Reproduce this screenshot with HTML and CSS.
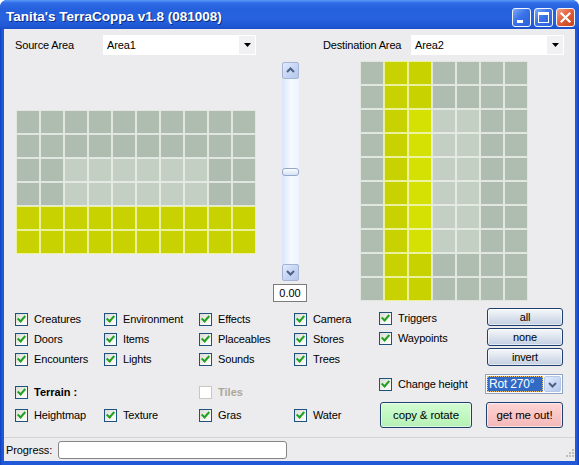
FILE: index.html
```html
<!DOCTYPE html>
<html>
<head>
<meta charset="utf-8">
<title>Tanita's TerraCoppa</title>
<link rel="stylesheet" href="styles.css">
</head>
<body>
<div class="window">
  <div class="titlebar">
    <span class="title">Tanita's TerraCoppa v1.8 (081008)</span>
    <div class="tbtns">
      <span class="tb"><svg width="17" height="17" viewBox="0 0 17 17"><rect x="4" y="11" width="6" height="3" fill="#fff"/></svg></span>
      <span class="tb"><svg width="17" height="17" viewBox="0 0 17 17"><rect x="3.5" y="3.5" width="10" height="10" fill="none" stroke="#fff" stroke-width="1"/><rect x="3" y="3" width="11" height="3" fill="#fff"/></svg></span>
      <span class="tb close"><svg width="17" height="17" viewBox="0 0 17 17"><path d="M4.5 4.5 L12.5 12.5 M12.5 4.5 L4.5 12.5" stroke="#fff" stroke-width="2.2" stroke-linecap="square"/></svg></span>
    </div>
  </div>
  <div class="client">
    <div class="main">
      <div class="top">
        <div class="field src">
          <span class="flabel">Source Area</span>
          <div class="combo"><span class="ctext">Area1</span><span class="dd"><svg width="7" height="4" viewBox="0 0 7 4"><path d="M0 0 H7 L3.5 4 Z" fill="#000"/></svg></span></div>
        </div>
        <div class="field dst">
          <span class="flabel">Destination Area</span>
          <div class="combo"><span class="ctext">Area2</span><span class="dd"><svg width="7" height="4" viewBox="0 0 7 4"><path d="M0 0 H7 L3.5 4 Z" fill="#000"/></svg></span></div>
        </div>
        <div class="cells lgrid">
          <i class="g"></i><i class="g"></i><i class="g"></i><i class="g"></i><i class="g"></i><i class="g"></i><i class="g"></i><i class="g"></i><i class="g"></i><i class="g"></i>
          <i class="g"></i><i class="g"></i><i class="g"></i><i class="g"></i><i class="g"></i><i class="g"></i><i class="g"></i><i class="g"></i><i class="g"></i><i class="g"></i>
          <i class="g"></i><i class="g"></i><i class="l"></i><i class="l"></i><i class="l"></i><i class="l"></i><i class="l"></i><i class="l"></i><i class="g"></i><i class="g"></i>
          <i class="g"></i><i class="g"></i><i class="l"></i><i class="l"></i><i class="l"></i><i class="l"></i><i class="l"></i><i class="l"></i><i class="g"></i><i class="g"></i>
          <i class="y"></i><i class="y"></i><i class="y"></i><i class="y"></i><i class="y"></i><i class="y"></i><i class="y"></i><i class="y"></i><i class="y"></i><i class="y"></i>
          <i class="y"></i><i class="y"></i><i class="y"></i><i class="y"></i><i class="y"></i><i class="y"></i><i class="y"></i><i class="y"></i><i class="y"></i><i class="y"></i>
        </div>
        <div class="slider">
          <div class="sbar">
            <span class="sbtn"><svg width="15" height="15" viewBox="0 0 15 15"><path d="M4 9 L7.5 5.5 L11 9" fill="none" stroke="#4d6185" stroke-width="2"/></svg></span>
            <div class="track"><span class="thumb"></span></div>
            <span class="sbtn"><svg width="15" height="15" viewBox="0 0 15 15"><path d="M4 6 L7.5 9.5 L11 6" fill="none" stroke="#4d6185" stroke-width="2"/></svg></span>
          </div>
          <div class="val">0.00</div>
        </div>
        <div class="cells rgrid">
          <i class="g"></i><i class="y"></i><i class="y"></i><i class="g"></i><i class="g"></i><i class="g"></i><i class="g"></i>
          <i class="g"></i><i class="y"></i><i class="y"></i><i class="g"></i><i class="g"></i><i class="g"></i><i class="g"></i>
          <i class="g"></i><i class="y"></i><i class="b"></i><i class="l"></i><i class="l"></i><i class="g"></i><i class="g"></i>
          <i class="g"></i><i class="y"></i><i class="b"></i><i class="l"></i><i class="l"></i><i class="g"></i><i class="g"></i>
          <i class="g"></i><i class="y"></i><i class="b"></i><i class="l"></i><i class="l"></i><i class="g"></i><i class="g"></i>
          <i class="g"></i><i class="y"></i><i class="b"></i><i class="l"></i><i class="l"></i><i class="g"></i><i class="g"></i>
          <i class="g"></i><i class="y"></i><i class="b"></i><i class="l"></i><i class="l"></i><i class="g"></i><i class="g"></i>
          <i class="g"></i><i class="y"></i><i class="b"></i><i class="l"></i><i class="l"></i><i class="g"></i><i class="g"></i>
          <i class="g"></i><i class="y"></i><i class="y"></i><i class="g"></i><i class="g"></i><i class="g"></i><i class="g"></i>
          <i class="g"></i><i class="y"></i><i class="y"></i><i class="g"></i><i class="g"></i><i class="g"></i><i class="g"></i>
        </div>
      </div>
      <div class="bottom">
        <div class="lblock">
          <div class="opts">
            <label class="chk"><span class="cb on"></span>Creatures</label>
            <label class="chk"><span class="cb on"></span>Environment</label>
            <label class="chk"><span class="cb on"></span>Effects</label>
            <label class="chk"><span class="cb on"></span>Camera</label>
            <label class="chk"><span class="cb on"></span>Doors</label>
            <label class="chk"><span class="cb on"></span>Items</label>
            <label class="chk"><span class="cb on"></span>Placeables</label>
            <label class="chk"><span class="cb on"></span>Stores</label>
            <label class="chk"><span class="cb on"></span>Encounters</label>
            <label class="chk"><span class="cb on"></span>Lights</label>
            <label class="chk"><span class="cb on"></span>Sounds</label>
            <label class="chk"><span class="cb on"></span>Trees</label>
          </div>
          <div class="opts terr">
            <label class="chk bold"><span class="cb on"></span>Terrain :</label>
            <span></span>
            <label class="chk bold dis"><span class="cb off"></span>Tiles</label>
            <span></span>
            <label class="chk"><span class="cb on"></span>Heightmap</label>
            <label class="chk"><span class="cb on"></span>Texture</label>
            <label class="chk"><span class="cb on"></span>Gras</label>
            <label class="chk"><span class="cb on"></span>Water</label>
          </div>
        </div>
        <div class="rblock">
          <label class="chk"><span class="cb on"></span>Triggers</label>
          <span class="btn small">all</span>
          <label class="chk"><span class="cb on"></span>Waypoints</label>
          <span class="btn small">none</span>
          <span></span>
          <span class="btn small">invert</span>
          <label class="chk low"><span class="cb on"></span>Change height</label>
          <div class="rcombo"><span class="sel">Rot 270°</span><span class="rdd"><svg width="15" height="15" viewBox="0 0 15 15"><path d="M4 6 L7.5 9.5 L11 6" fill="none" stroke="#4d6185" stroke-width="2"/></svg></span></div>
          <span class="btn big copy">copy &amp; rotate</span>
          <span class="btn big out">get me out!</span>
        </div>
      </div>
    </div>
    <div class="status">
      <span class="plabel">Progress:</span>
      <span class="pbar"></span>
      <svg class="grip" width="12" height="12" viewBox="0 0 12 12">
        <rect x="9" y="1" width="2" height="2" fill="#c2bfb7"/>
        <rect x="6" y="4" width="2" height="2" fill="#c2bfb7"/><rect x="9" y="4" width="2" height="2" fill="#c2bfb7"/>
        <rect x="3" y="7" width="2" height="2" fill="#c2bfb7"/><rect x="6" y="7" width="2" height="2" fill="#c2bfb7"/><rect x="9" y="7" width="2" height="2" fill="#c2bfb7"/>
      </svg>
    </div>
  </div>
</div>
</body>
</html>
```

FILE: styles.css
```css
html, body {
  margin: 0;
  padding: 0;
  background: #ffffff;
}
body {
  font-family: "Liberation Sans", Arial, sans-serif;
  font-size: 11px;
  color: #000;
}
.window {
  width: 579px;
  height: 465px;
  box-sizing: border-box;
  display: flex;
  flex-direction: column;
  background: linear-gradient(to right, #0b3fbf 0, #2058d8 2px, #2058d8 577px, #0b3fbf 579px);
  border-radius: 7px 7px 0 0;
  overflow: hidden;
}
.titlebar {
  height: 29px;
  flex: none;
  display: flex;
  align-items: center;
  padding-left: 6px;
  background: linear-gradient(#5a98f4 0, #2f6ce6 3px, #2561dd 9px, #2862df 18px, #1f58d4 26px, #1a4fc8 29px);
  color: #fff;
}
.title {
  font-weight: bold;
  font-size: 13.5px;
  padding-top: 3px;
  text-shadow: 1px 1px 0 #0d2a86;
  white-space: nowrap;
}
.tbtns {
  margin-left: auto;
  margin-right: 4px;
  align-self: flex-start;
  margin-top: 8px;
  display: flex;
  gap: 3px;
}
.tb {
  width: 19px;
  height: 19px;
  box-sizing: border-box;
  border: 1px solid #f2f6ff;
  border-radius: 3px;
  background: linear-gradient(135deg, #7eaaf8 0%, #3a72e8 45%, #2a60da 100%);
  display: flex;
  align-items: center;
  justify-content: center;
}
.tb.close {
  background: linear-gradient(135deg, #f2a58c 0%, #e2603c 45%, #c8411f 100%);
}
.client {
  flex: 1;
  margin: 0 4px 4px;
  background: #ecebed;
  display: flex;
  flex-direction: column;
}
.main {
  height: 408px;
  flex: none;
}
.top {
  display: grid;
  grid-template-columns: 241px 67px 241px;
  grid-template-rows: 20px 242px;
  row-gap: 6px;
  padding: 6px 0 0 11px;
}
.field {
  display: flex;
  align-items: center;
  grid-row: 1;
}
.src { grid-column: 1; }
.dst { grid-column: 3; }
.flabel {
  width: 88px;
  flex: none;
  letter-spacing: -0.15px;
  white-space: nowrap;
}
.combo {
  width: 153px;
  height: 20px;
  background: #fff;
  display: flex;
  align-items: center;
}
.ctext {
  padding-left: 4px;
  letter-spacing: -0.15px;
}
.dd {
  margin-left: auto;
  width: 16px;
  height: 18px;
  margin-right: 1px;
  background: #f1f0f2;
  display: flex;
  align-items: center;
  justify-content: center;
}
.cells {
  display: grid;
  grid-auto-rows: 24px;
}
.cells i {
  display: block;
  box-sizing: border-box;
  border: 1px solid #e2e7e2;
}
.lgrid {
  grid-column: 1;
  grid-row: 2;
  grid-template-columns: repeat(10, 24px);
  align-self: center;
  justify-self: center;
}
.rgrid {
  grid-column: 3;
  grid-row: 2;
  grid-template-columns: repeat(7, 24px);
  align-self: start;
  justify-self: center;
}
.cells .g { background: #aebdb0; border-color: #e1e6e1; }
.cells .l { background: #c3cfc3; border-color: #e4e9e4; }
.cells .y { background: #c8d200; border-color: #eaf09c; }
.cells .b { background: #d4e102; border-color: #edf3a2; }

.slider {
  grid-column: 2;
  grid-row: 2;
  padding-left: 17px;
  margin-top: 1px;
  display: flex;
  flex-direction: column;
}
.sbar {
  width: 17px;
  height: 219px;
  margin-left: 9px;
  display: flex;
  flex-direction: column;
}
.sbtn {
  width: 17px;
  height: 17px;
  flex: none;
  box-sizing: border-box;
  border: 1px solid #a3b4d4;
  border-radius: 2px;
  background: linear-gradient(135deg, #e2ebfd 0%, #c7d6f4 50%, #b4c7ec 100%);
  display: flex;
  align-items: center;
  justify-content: center;
}
.track {
  flex: 1;
  background: linear-gradient(to right, #dbe6fb 0%, #f7f9fe 55%, #eef3fd 100%);
  display: flex;
  flex-direction: column;
  justify-content: center;
}
.thumb {
  display: block;
  height: 8px;
  box-sizing: border-box;
  border: 1px solid #94a7cb;
  border-radius: 3px;
  background: linear-gradient(#fbfcff, #d6e1f6);
}
.val {
  width: 34px;
  height: 18px;
  margin-top: 3px;
  box-sizing: border-box;
  border: 1px solid #7b7b7b;
  background: #fff;
  display: flex;
  align-items: center;
  justify-content: center;
  font-size: 11px;
}

.bottom {
  display: flex;
  padding-left: 11px;
  margin-top: 5px;
}
.lblock {
  width: 364px;
  padding-top: 1px;
}
.opts {
  display: grid;
  grid-template-columns: 89px 95px 95px 85px;
  grid-auto-rows: 20px;
}
.terr {
  grid-template-rows: 20px 20px;
  row-gap: 3px;
  margin-top: 13px;
}
.chk {
  display: flex;
  align-items: center;
  gap: 6px;
  white-space: nowrap;
  letter-spacing: -0.15px;
}
.chk.bold { font-weight: bold; letter-spacing: 0; }
.chk.dis { color: #aca899; }
.cb {
  width: 13px;
  height: 13px;
  flex: none;
  box-sizing: border-box;
  border: 1px solid #1c5180;
  background: linear-gradient(135deg, #dcdcd5 0%, #f4f4f0 60%, #ffffff 100%);
  display: flex;
  justify-content: center;
}
.cb.on::after {
  content: "";
  width: 3px;
  height: 6px;
  margin-top: 0.5px;
  border: solid #21a121;
  border-width: 0 2.5px 2.5px 0;
  transform: rotate(42deg);
}
.cb.off {
  border-color: #cac8bb;
  background: #fff;
}
.rblock {
  display: grid;
  grid-template-columns: 108px 76px;
  grid-template-rows: 20px 20px 20px 26px 34px;
}
.chk.low { align-self: end; height: 20px; }
.btn {
  box-sizing: border-box;
  border: 1px solid #1f3f6e;
  border-radius: 3px;
  display: flex;
  align-items: center;
  justify-content: center;
  letter-spacing: -0.15px;
  background: linear-gradient(#f6f8fb 0%, #e2e8f1 40%, #c3cfe1 100%);
  box-shadow: inset 0 0 0 1px rgba(255,255,255,0.55);
}
.btn.small {
  height: 18px;
  align-self: start;
}
.btn.big {
  height: 26px;
  align-self: end;
  font-size: 11.5px;
}
.copy {
  width: 92px;
  margin-left: 1px;
  background: linear-gradient(#d2fcd2 0%, #c2f8c2 50%, #b6f0b6 100%);
}
.out {
  width: 77px;
  margin-left: -1px;
  background: linear-gradient(#fdd4d4 0%, #fbc5c5 50%, #f3b8b8 100%);
}
.rcombo {
  align-self: end;
  width: 78px;
  height: 20px;
  margin-left: -2px;
  box-sizing: border-box;
  border: 1px solid #8ea6c4;
  background: #fff;
  display: flex;
  padding: 1px;
}
.sel {
  flex: 1;
  background: #316ac5;
  color: #fff;
  font-size: 12px;
  padding-left: 2px;
  display: flex;
  align-items: center;
  outline: 1px dotted #f0c070;
  outline-offset: -1px;
  letter-spacing: -0.2px;
}
.rdd {
  width: 17px;
  margin-left: 1px;
  box-sizing: border-box;
  border: 1px solid #b7c7e6;
  border-radius: 2px;
  background: linear-gradient(135deg, #e4ecfd 0%, #c9d8f5 55%, #b6c8ec 100%);
  display: flex;
  align-items: center;
  justify-content: center;
}

.status {
  flex: 1;
  border-top: 1px solid #d6d3d0;
  display: flex;
  align-items: center;
  padding-left: 2px;
}
.plabel {
  letter-spacing: -0.1px;
}
.pbar {
  width: 229px;
  height: 18px;
  margin-left: 6px;
  box-sizing: border-box;
  border: 1px solid #868686;
  border-radius: 3px;
  background: #fff;
}
.grip {
  margin-left: auto;
  align-self: flex-end;
  margin-bottom: 1px;
}
```
